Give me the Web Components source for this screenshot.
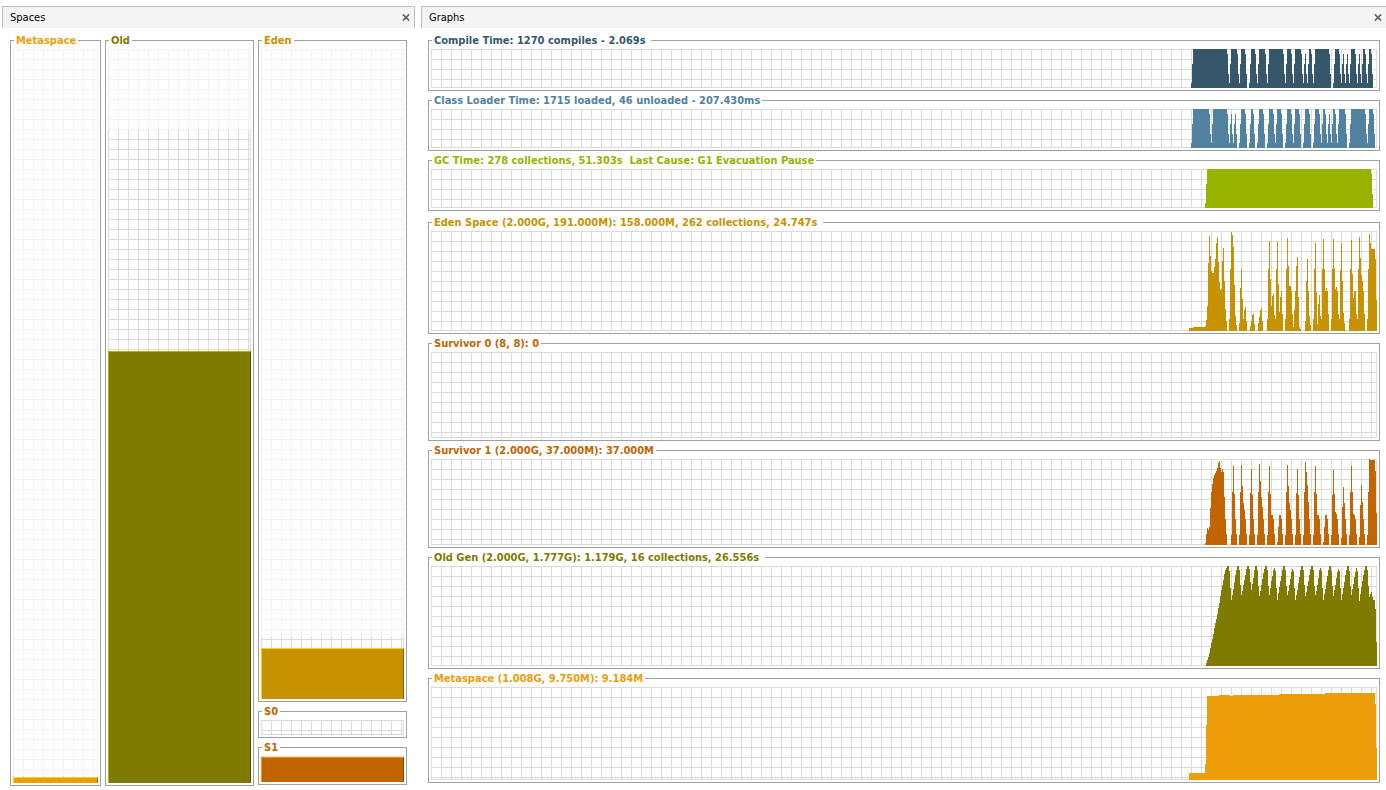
<!DOCTYPE html>
<html lang="en">
<head>
<meta charset="utf-8">
<title>Visual GC</title>
<style>
  body {
    margin: 0;
    background: #fff;
    color: #000;
    font: 11px/15px "DejaVu Sans Condensed", "DejaVu Sans", sans-serif;
  }
</style>
</head>
<body>
<gc-monitor></gc-monitor>

<template id="gc-monitor">
  <style>
    :host {
      display: grid;
      grid-template-columns: minmax(0, 413fr) minmax(0, 965fr);
      gap: 6px;
      box-sizing: border-box;
      min-height: 100vh;
      padding: 6px 0 0 2px;
    }
    .spaces {
      flex: 1;
      display: grid;
      grid-template-columns: 91fr 149fr 149fr;
      gap: 4px;
      padding: 5px 8px 4px;
    }
    .young {
      display: grid;
      grid-template-rows: 1fr 34px 45px;
      gap: 2px;
      padding-bottom: 1px;
    }
    .graphs {
      flex: 1;
      display: flex;
      flex-direction: column;
      gap: 4px;
      padding: 5px 6px 7px 7px;
    }
    .times {
      display: grid;
      grid-auto-rows: 58px;
      gap: 2px;
    }
    .memory {
      flex: 1;
      display: grid;
      grid-template-rows: 119fr 105fr 105fr 119fr 112fr;
      gap: 2px;
    }
  </style>
  <gc-pane heading="Spaces" closed-edge>
    <div class="spaces">
      <gc-frame label="Metaspace" color="#ee9e09"><gc-space color="#ee9e09" light="#ffd810" dark="#a66f06" max="734" committed="7" used="6"></gc-space></gc-frame>
      <gc-frame label="Old" color="#7f7b00"><gc-space color="#7f7b00" light="#b5af00" dark="#585600" max="734" committed="653" used="432"></gc-space></gc-frame>
      <div class="young">
        <gc-frame label="Eden" color="#c79200"><gc-space color="#c79200" light="#ffd000" dark="#8b6600" max="650" committed="62" used="51"></gc-space></gc-frame>
        <gc-frame label="S0" color="#c26400"><gc-space color="#c26400" light="#ff8e00" dark="#874600" max="15" committed="15" used="0"></gc-space></gc-frame>
        <gc-frame label="S1" color="#c26400"><gc-space color="#c26400" light="#ff8e00" dark="#874600" max="26" committed="26" used="25"></gc-space></gc-frame>
      </div>
    </div>
  </gc-pane>
  <gc-pane heading="Graphs">
    <div class="graphs">
      <div class="times">
        <gc-frame label="Compile Time: 1270 compiles - 2.069s " color="#355769"><gc-plot series="compile" color="#355769"></gc-plot></gc-frame>
        <gc-frame label="Class Loader Time: 1715 loaded, 46 unloaded - 207.430ms" color="#5182a0"><gc-plot series="loader" color="#5182a0"></gc-plot></gc-frame>
        <gc-frame label="GC Time: 278 collections, 51.303s  Last Cause: G1 Evacuation Pause" color="#98b200"><gc-plot series="gc" color="#98b200"></gc-plot></gc-frame>
      </div>
      <div class="memory">
        <gc-frame label="Eden Space (2.000G, 191.000M): 158.000M, 262 collections, 24.747s " color="#c79200"><gc-plot series="eden" color="#c79200"></gc-plot></gc-frame>
        <gc-frame label="Survivor 0 (8, 8): 0" color="#c26400"><gc-plot series="s0" color="#c26400"></gc-plot></gc-frame>
        <gc-frame label="Survivor 1 (2.000G, 37.000M): 37.000M" color="#c26400"><gc-plot series="s1" color="#c26400"></gc-plot></gc-frame>
        <gc-frame label="Old Gen (2.000G, 1.777G): 1.179G, 16 collections, 26.556s " color="#7f7b00"><gc-plot series="old" color="#7f7b00"></gc-plot></gc-frame>
        <gc-frame label="Metaspace (1.008G, 9.750M): 9.184M" color="#ed9c0a"><gc-plot series="meta" color="#ed9c0a"></gc-plot></gc-frame>
      </div>
    </div>
  </gc-pane>
</template>

<template id="gc-pane">
  <style>
    :host { display: flex; flex-direction: column; min-width: 0; }
    header {
      display: flex;
      align-items: center;
      justify-content: space-between;
      box-sizing: border-box;
      height: 22px;
      padding: 0 4px 0 7px;
      border: 1px solid #bdbdbd;
      border-width: 1px 0 0 1px;
      background: #f4f4f4;
    }
    :host([closed-edge]) header { border-right-width: 1px; }
    h2 { margin: 0; font: inherit; }
    button { display: flex; padding: 0; border: 0; background: none; }
    svg { display: block; width: 8px; height: 7px; }
  </style>
  <header>
    <h2></h2>
    <button type="button" aria-label="Close"><svg viewBox="0 0 8 7"><path d="M.9.5 7.1 6.5M7.1.5.9 6.5" stroke="#606060" stroke-width="1.7"/></svg></button>
  </header>
  <slot></slot>
</template>

<template id="gc-frame">
  <style>
    :host { display: flex; min-width: 0; min-height: 0; }
    fieldset {
      flex: 1;
      display: flex;
      flex-direction: column;
      min-width: 0;
      margin: 0;
      padding: 1px 2px 2px;
      border: 1px solid #a0a0a0;
    }
    legend {
      margin-left: 1px;
      padding: 0 2px;
      color: var(--ink);
      font-weight: bold;
      white-space: pre;
    }
  </style>
  <fieldset><legend></legend><slot></slot></fieldset>
</template>

<template id="gc-space">
  <style>
    :host { flex: 1; display: grid; min-height: 0; }
    .grid, .bar { grid-area: 1 / 1; }
    .grid {
      background:
        linear-gradient(var(--line), var(--line)) right / 1px 100% no-repeat,
        linear-gradient(var(--line), var(--line)) bottom / 100% 1px no-repeat,
        linear-gradient(to right, var(--line) 1px, transparent 1px) 0 0 / 10px 10px,
        linear-gradient(var(--line) 1px, transparent 1px) 0 0 / 10px 10px;
    }
    .reserved { --line: #f2f2f2; }
    .committed { --line: #dadada; clip-path: inset(calc(100% - var(--committed)) 0 0 0); }
    .bar {
      z-index: 1;
      align-self: end;
      box-sizing: border-box;
      height: var(--used);
      background: var(--ink);
      border: solid var(--light);
      border-width: 1px 1px 0;
      border-right-color: var(--dark);
    }
    .bar[hidden] { display: none; }
  </style>
  <div class="grid reserved"></div>
  <div class="grid committed"></div>
  <div class="bar"></div>
</template>

<template id="gc-plot">
  <style>
    :host {
      --line: #dadada;
      flex: 1;
      display: flex;
      justify-content: flex-end;
      min-height: 0;
      background:
        linear-gradient(var(--line), var(--line)) right / 1px 100% no-repeat,
        linear-gradient(var(--line), var(--line)) bottom / 100% 1px no-repeat,
        linear-gradient(to right, var(--line) 1px, transparent 1px) 0 0 / 10px 10px,
        linear-gradient(var(--line) 1px, transparent 1px) 0 0 / 10px 10px;
    }
    .hold { flex: 0 0 197px; display: grid; min-height: 0; contain: size; }
    svg { display: block; width: 100%; height: 100%; }
  </style>
  <div class="hold"><svg preserveAspectRatio="none" shape-rendering="crispEdges" aria-hidden="true"><path/></svg></div>
</template>

<script>
  const SAMPLES = 197;

  // Activity pulses: "a-b" is a saturated run of samples, a lone number a short spike.
  const PULSES = {
    compile: '13-47 51-57 61-65 71-75 79-85 89-103 107-111 115-121 125 129-131 135-149 155-159 163 167 171-175 179 183-185 189-191',
    loader: '13-29 33-47 51 55 61-65 71-73 79-83 89-93 97-101 107-111 115-119 125-129 135-139 143-145 149 153-155 159-165 171-185 189-193',
    gc: '27-191'
  };

  // Levels: "sample:height", each holding until the next one.
  const LEVELS = {
    eden: [100, '9:3 13:4 25:5 26:11 27:25 28:68 29:95 30:75 31:60 32:58 34:64 35:72 36:88 37:94 38:69 39:49 40:41 41:42 42:70 43:83 44:50 45:22 46:10 47:1 48:0 49:12 50:62 51:99 52:96 53:84 54:46 55:15 56:6 57:0 59:8 60:43 61:62 62:32 63:12 64:21 65:24 66:10 67:0 69:1 70:5 71:10 72:16 73:17 74:7 75:0 77:1 78:8 79:14 80:21 81:23 82:10 83:0 87:12 88:62 89:90 90:52 91:25 92:35 93:37 94:16 95:12 96:62 97:89 98:47 99:19 100:34 101:40 102:17 103:0 105:12 106:62 107:93 108:65 109:45 111:40 112:17 113:4 114:21 115:40 116:65 117:74 118:34 119:4 120:2 121:0 125:10 126:50 127:72 128:40 129:15 130:6 131:0 133:12 134:62 135:88 136:39 137:7 138:27 139:36 140:15 141:12 142:62 143:92 144:62 145:40 146:43 147:40 148:17 149:0 151:12 152:62 153:92 154:63 155:42 156:44 157:40 158:17 159:12 160:61 161:88 162:50 163:18 164:8 165:1 166:0 169:12 170:62 171:91 172:57 173:33 174:40 176:17 177:12 178:62 179:94 180:73 181:56 182:50 183:40 184:17 185:0 187:12 188:62 189:97 190:88 191:82 195:72 196:31'],
    s0: [86, ''],
    s1: [86, '25:2 26:11 27:17 28:15 29:18 30:37 31:53 32:61 33:67 34:70 35:72 36:74 37:77 38:82 39:84 40:77 41:73 42:76 43:73 44:48 45:26 46:11 47:0 51:10 52:53 53:79 54:51 55:26 56:11 57:0 59:10 60:53 61:80 62:59 63:42 64:35 65:26 66:11 67:0 69:10 70:52 71:76 72:50 73:26 74:11 75:0 77:10 78:53 79:81 80:64 81:48 82:38 83:26 84:11 85:0 87:10 88:53 89:79 90:51 91:30 93:26 94:11 95:0 97:3 98:18 99:30 101:26 102:11 103:0 105:10 106:53 107:80 108:59 109:42 110:35 111:26 112:11 113:0 115:10 116:52 117:76 118:50 119:26 120:11 121:0 123:10 124:53 125:83 126:73 127:60 128:43 129:26 130:11 131:0 133:10 134:53 135:79 136:51 137:30 139:26 140:11 141:0 143:3 144:18 145:30 147:26 148:11 149:0 151:10 152:50 153:75 154:51 155:33 156:31 157:26 158:11 159:0 161:7 162:38 163:58 164:42 165:26 166:11 167:0 169:10 170:53 171:79 172:53 173:31 174:30 175:26 176:11 177:0 179:8 180:40 181:60 182:43 183:26 184:11 185:0 187:10 188:53 189:86 190:85 195:74 196:32'],
    old: [100, '26:3 27:6 28:9 29:13 30:18 31:23 32:27 33:32 34:38 35:43 36:47 37:52 38:58 39:63 40:70 41:76 42:81 43:86 44:92 45:96 46:98 47:100 49:95 50:78 51:66 52:71 53:77 54:84 55:91 56:96 57:100 59:96 60:81 61:71 62:75 63:81 64:86 65:91 66:97 67:100 69:97 70:84 71:76 72:82 73:88 74:96 75:100 77:96 78:80 79:70 80:75 81:81 82:87 83:93 84:97 85:100 87:96 88:80 89:71 90:78 91:85 92:90 93:96 94:98 95:95 96:78 97:66 98:73 99:79 100:85 101:90 102:96 103:100 105:96 106:80 107:71 108:75 109:81 110:87 111:94 112:97 113:95 114:78 115:66 116:71 117:76 118:83 119:89 120:96 121:100 123:96 124:81 125:70 126:74 127:80 128:85 129:91 130:97 131:100 133:96 134:80 135:71 136:75 137:81 138:88 139:96 140:98 141:95 142:78 143:66 144:72 145:77 146:84 147:90 148:96 149:100 151:95 152:80 153:70 154:76 155:81 156:88 157:94 158:97 159:95 160:78 161:66 162:72 163:78 164:84 165:91 166:96 167:100 169:95 170:80 171:71 172:77 173:82 174:89 175:94 176:98 177:95 178:78 179:65 180:72 181:79 182:85 183:91 184:96 185:100 187:96 188:80 189:69 190:72 191:74 192:69 193:66 195:57 196:24'],
    meta: [93, '9:7 25:16 26:55 27:84 39:85 50:84 53:85 99:86 145:87 195:76 196:32']
  };

  function samplesOf(name) {
    const values = new Array(SAMPLES).fill(0);
    const raise = (i, h) => { values[i] = Math.max(values[i], h); };
    if (PULSES[name]) {
      for (const pulse of PULSES[name].split(' ')) {
        const [start, end] = pulse.split('-').map(Number);
        raise(start - 2, 5);
        raise(start - 1, 24);
        if (end === undefined) {
          raise(start, 34);
          raise(start + 1, 14);
        } else {
          for (let i = start; i < end; i++) raise(i, 39);
          raise(end, 34);
          raise(end + 1, 14);
        }
      }
      return [39, values];
    }
    const [height, text] = LEVELS[name];
    for (const step of text.split(' ').filter(Boolean)) {
      const [from, h] = step.split(':').map(Number);
      values.fill(h, from);
    }
    return [height, values];
  }

  class Base extends HTMLElement {
    constructor() {
      super();
      this.attachShadow({ mode: 'open' })
        .append(document.getElementById(this.localName).content.cloneNode(true));
    }
    $(selector) { return this.shadowRoot.querySelector(selector); }
  }

  customElements.define('gc-pane', class extends Base {
    connectedCallback() { this.$('h2').textContent = this.getAttribute('heading'); }
  });

  customElements.define('gc-frame', class extends Base {
    connectedCallback() {
      this.$('legend').textContent = this.getAttribute('label');
      this.$('fieldset').style.setProperty('--ink', this.getAttribute('color'));
    }
  });

  customElements.define('gc-space', class extends Base {
    connectedCallback() {
      const max = Number(this.getAttribute('max'));
      const share = name => (100 * this.getAttribute(name) / max) + '%';
      this.style.setProperty('--ink', this.getAttribute('color'));
      this.style.setProperty('--light', this.getAttribute('light'));
      this.style.setProperty('--dark', this.getAttribute('dark'));
      this.style.setProperty('--committed', share('committed'));
      this.style.setProperty('--used', share('used'));
      this.$('.bar').hidden = this.getAttribute('used') === '0';
    }
  });

  customElements.define('gc-plot', class extends Base {
    connectedCallback() {
      const [height, values] = samplesOf(this.getAttribute('series'));
      this.$('svg').setAttribute('viewBox', `0 0 ${SAMPLES} ${height}`);
      const path = this.$('path');
      path.setAttribute('d', `M0 ${height}` + values.map(v => `V${height - v}h1`).join('') + `V${height}z`);
      path.setAttribute('fill', this.getAttribute('color'));
    }
  });

  customElements.define('gc-monitor', class extends Base {});
</script>
</body>
</html>
